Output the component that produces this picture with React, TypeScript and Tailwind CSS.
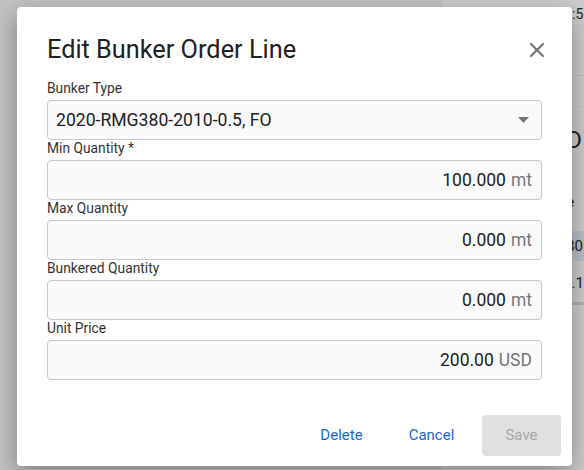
import { X } from 'lucide-react'

const fields = [
  { label: 'Min Quantity *', value: '100.000', unit: 'mt' },
  { label: 'Max Quantity', value: '0.000', unit: 'mt' },
  { label: 'Bunkered Quantity', value: '0.000', unit: 'mt' },
  { label: 'Unit Price', value: '200.00', unit: 'USD' },
]

function Field({ label, children }: { label: string; children: React.ReactNode }) {
  return (
    <div className="flex flex-col">
      <label className="text-[13.8px] leading-4 mb-1 text-[#333]">{label}</label>
      {children}
    </div>
  )
}

export default function App() {
  return (
    <div
      className="relative w-[584px] h-[470px] overflow-hidden flex bg-[#c4c4c4]"
      style={{ fontFamily: 'Roboto, "Liberation Sans", sans-serif' }}
    >
      <div className="w-[449px] bg-[#c2c2c2]" />
      <div className="flex-1 bg-[#cccccc] text-[#222] pl-[124px]">
        <div className="h-[76px] border-b border-[#bdbdbd] pt-[6px] text-[14px] leading-4 -ml-[2px]">3:5</div>
        <div className="h-[31px] border-b border-[#c2c2c2]" />
        <div className="pt-[19px] text-[24px] leading-7">D</div>
        <div className="pt-[38px] text-[15px] leading-5">e</div>
        <div className="mt-[19px] h-[30px] bg-[#b9c0c8] text-[15px] leading-[30px]">80</div>
        <div className="h-[44px] border-b-[3px] border-[#b0b0b0] text-[15px] leading-[44px] -ml-[3px]">0.1</div>
      </div>

      <div className="absolute left-[17px] top-[7px] w-[555px] h-[459px] bg-white rounded-[4px] shadow-[0_8px_24px_rgba(0,0,0,0.35)] flex flex-col">
        <div className="flex items-center justify-between pl-[30px] pr-[23px] pt-[20px] h-[66px]">
          <h2 className="text-[25.3px] leading-7 text-[#212121]">Edit Bunker Order Line</h2>
          <X size={24} strokeWidth={2.2} className="text-[#757575]" />
        </div>

        <div className="flex flex-col px-[30px] pt-[7px]">
          <Field label="Bunker Type">
            <div className="h-[40px] flex items-center justify-between border border-[#c8c8c8] rounded-[4px] bg-[#fafafa] pl-[8px] pr-[12px]">
              <span className="text-[17.6px] text-[#212121]">2020-RMG380-2010-0.5, FO</span>
              <svg width="11" height="6" viewBox="0 0 11 6">
                <path d="M0 0h11L5.5 6z" fill="#757575" />
              </svg>
            </div>
          </Field>
          {fields.map((f) => (
            <Field key={f.label} label={f.label}>
              <div className="h-[40px] flex items-center justify-end gap-[5px] border border-[#c8c8c8] rounded-[4px] bg-[#fafafa] pr-[9px]">
                <span className="text-[17.5px] text-[#212121]">{f.value}</span>
                <span className="text-[17.5px] text-[#757575]">{f.unit}</span>
              </div>
            </Field>
          ))}
        </div>

        <div className="mt-auto flex items-center justify-end pb-[10px] pr-[11px]">
          <button className="w-[75px] h-[41px] text-[15px] text-[#1e66c8]">Delete</button>
          <button className="ml-[15px] w-[75px] h-[41px] text-[15px] text-[#1e66c8]">Cancel</button>
          <button className="ml-[13px] w-[79px] h-[41px] rounded-[4px] bg-[#e0e0e0] text-[15px] text-[#a8a8a8]">
            Save
          </button>
        </div>
      </div>
    </div>
  )
}
